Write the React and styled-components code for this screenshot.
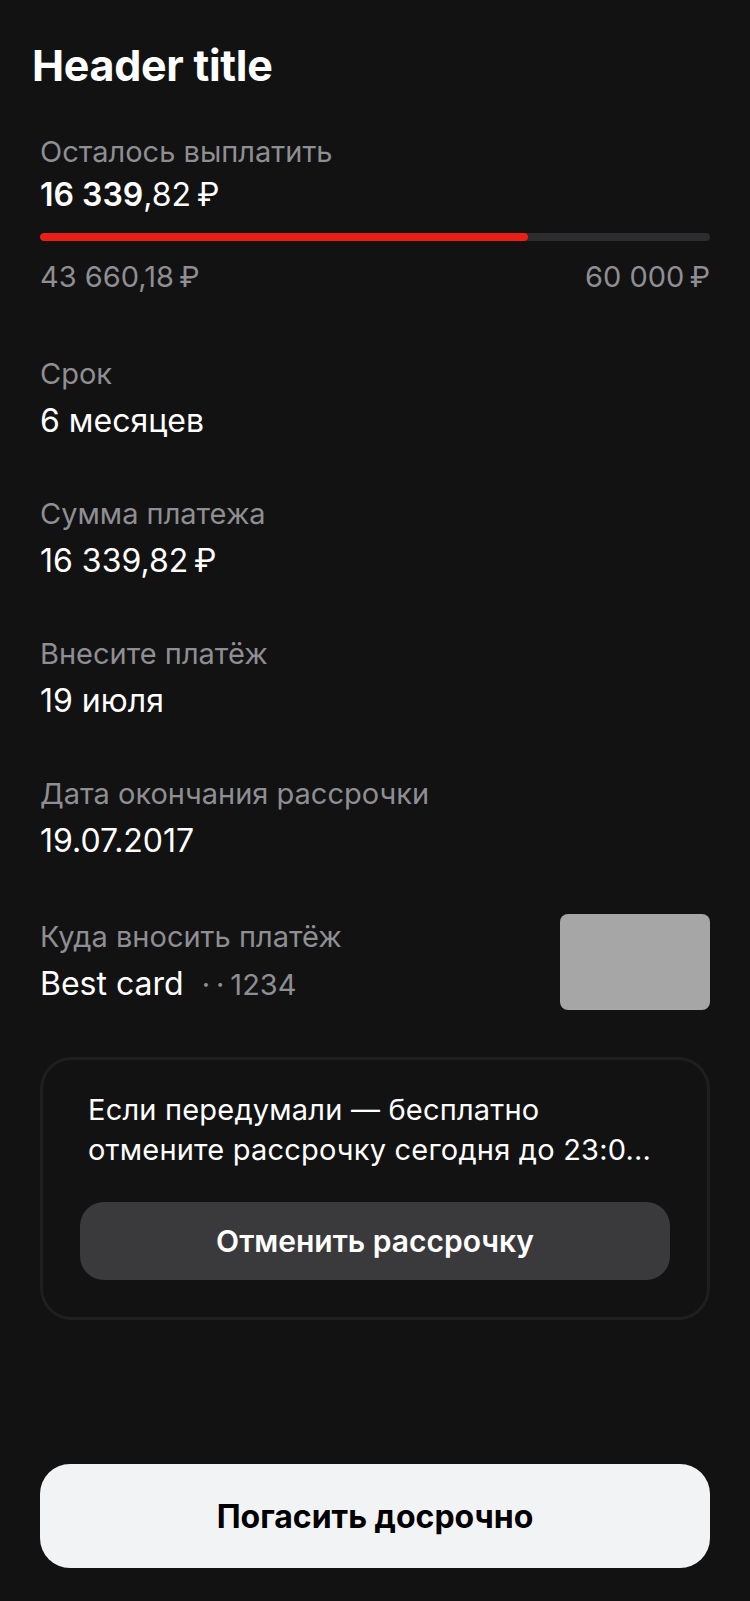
import React from "react";
import styled, { createGlobalStyle } from "styled-components";

const GlobalStyle = createGlobalStyle`
  html, body {
    margin: 0;
    padding: 0;
    background: #121212;
  }
  body {
    font-family: Inter, "Noto Sans", "Liberation Sans", sans-serif;
    color: #ffffff;
    -webkit-font-smoothing: antialiased;
  }
  * { box-sizing: border-box; }
`;

const Screen = styled.div`
  min-height: 100vh;
  display: flex;
  flex-direction: column;
  background: #121212;
`;

const Header = styled.header`
  padding: 39px 32px 0;
`;

const Title = styled.h1`
  margin: 0;
  font-size: 43px;
  line-height: 52px;
  font-weight: 700;
  letter-spacing: -0.3px;
  color: #ffffff;
`;

const Content = styled.main`
  padding: 41px 40px 0;
  display: flex;
  flex-direction: column;
`;

const Label = styled.div`
  font-size: 29px;
  line-height: 40px;
  font-weight: 400;
  color: #8e8e93;
`;

const Value = styled.div`
  margin-top: ${(p) => (p.$tight ? 1 : 5)}px;
  font-size: 32px;
  line-height: 44px;
  font-weight: 400;
  color: #ffffff;
  white-space: nowrap;
`;

const Strong = styled.span`
  font-weight: 600;
`;

const Track = styled.div`
  margin-top: 16px;
  height: 8px;
  border-radius: 4px;
  background: #2c2c2e;
  overflow: hidden;
`;

const Fill = styled.div`
  height: 100%;
  border-radius: 4px;
  background: #ea2016;
`;

const AmountsRow = styled.div`
  margin-top: 14px;
  display: flex;
  justify-content: space-between;
  font-size: 29px;
  line-height: 44px;
  color: #8e8e93;
`;

const Details = styled.div`
  margin-top: 55px;
  display: flex;
  flex-direction: column;
  gap: 51px;
`;

const Field = styled.div`
  display: flex;
  flex-direction: column;
`;

const CardRow = styled.div`
  display: flex;
  align-items: center;
  justify-content: space-between;
`;

const CardMask = styled.span`
  margin-left: 18px;
  font-size: 29px;
  color: #8e8e93;
`;

const Dots = styled.span`
  letter-spacing: 6px;
`;

const CardThumb = styled.div`
  width: 150px;
  height: 96px;
  border-radius: 8px;
  background: #a6a6a6;
  flex-shrink: 0;
`;

const CancelBox = styled.section`
  margin-top: 47px;
  border: 3px solid #1f1f20;
  border-radius: 32px;
  padding: 30px 37px 37px;
  display: flex;
  flex-direction: column;
`;

const CancelText = styled.p`
  margin: 0;
  padding: 0 8px;
  font-size: 29px;
  line-height: 40px;
  letter-spacing: 0.2px;
  color: #ffffff;
`;

const Line = styled.span`
  display: block;
  white-space: nowrap;
`;

const SecondaryButton = styled.button`
  margin-top: 32px;
  height: 78px;
  width: 100%;
  border: none;
  border-radius: 24px;
  background: #3a3a3c;
  color: #ffffff;
  font-family: inherit;
  font-size: 30px;
  font-weight: 600;
  cursor: pointer;
`;

const Footer = styled.footer`
  margin-top: auto;
  padding: 40px 40px 33px;
`;

const PrimaryButton = styled.button`
  width: 100%;
  height: 104px;
  border: none;
  border-radius: 30px;
  background: #f2f3f5;
  color: #000000;
  font-family: inherit;
  font-size: 32px;
  font-weight: 700;
  cursor: pointer;
`;

const paid = 43660.18;
const total = 60000;

const fields = [
  { label: "Срок", value: "6 месяцев" },
  { label: "Сумма платежа", value: "16 339,82\u2009₽" },
  { label: "Внесите платёж", value: "19 июля" },
  { label: "Дата окончания рассрочки", value: "19.07.2017" },
];

export default function App() {
  const percent = (paid / total) * 100;
  return (
    <>
      <GlobalStyle />
      <Screen>
        <Header>
          <Title>Header title</Title>
        </Header>
        <Content>
          <Field>
            <Label>Осталось выплатить</Label>
            <Value $tight>
              <Strong>16 339</Strong>,82{"\u2009"}₽
            </Value>
            <Track>
              <Fill style={{ width: `${percent}%` }} />
            </Track>
            <AmountsRow>
              <span>43 660,18{"\u2009"}₽</span>
              <span>60 000{"\u2009"}₽</span>
            </AmountsRow>
          </Field>
          <Details>
            {fields.map((f) => (
              <Field key={f.label}>
                <Label>{f.label}</Label>
                <Value>{f.value}</Value>
              </Field>
            ))}
            <CardRow>
              <Field>
                <Label>Куда вносить платёж</Label>
                <Value>
                  Best card
                  <CardMask>
                    <Dots>··</Dots>1234
                  </CardMask>
                </Value>
              </Field>
              <CardThumb />
            </CardRow>
          </Details>
          <CancelBox>
            <CancelText>
              <Line>Если передумали — бесплатно</Line>
              <Line>отмените рассрочку сегодня до 23:0...</Line>
            </CancelText>
            <SecondaryButton>Отменить рассрочку</SecondaryButton>
          </CancelBox>
        </Content>
        <Footer>
          <PrimaryButton>Погасить досрочно</PrimaryButton>
        </Footer>
      </Screen>
    </>
  );
}
